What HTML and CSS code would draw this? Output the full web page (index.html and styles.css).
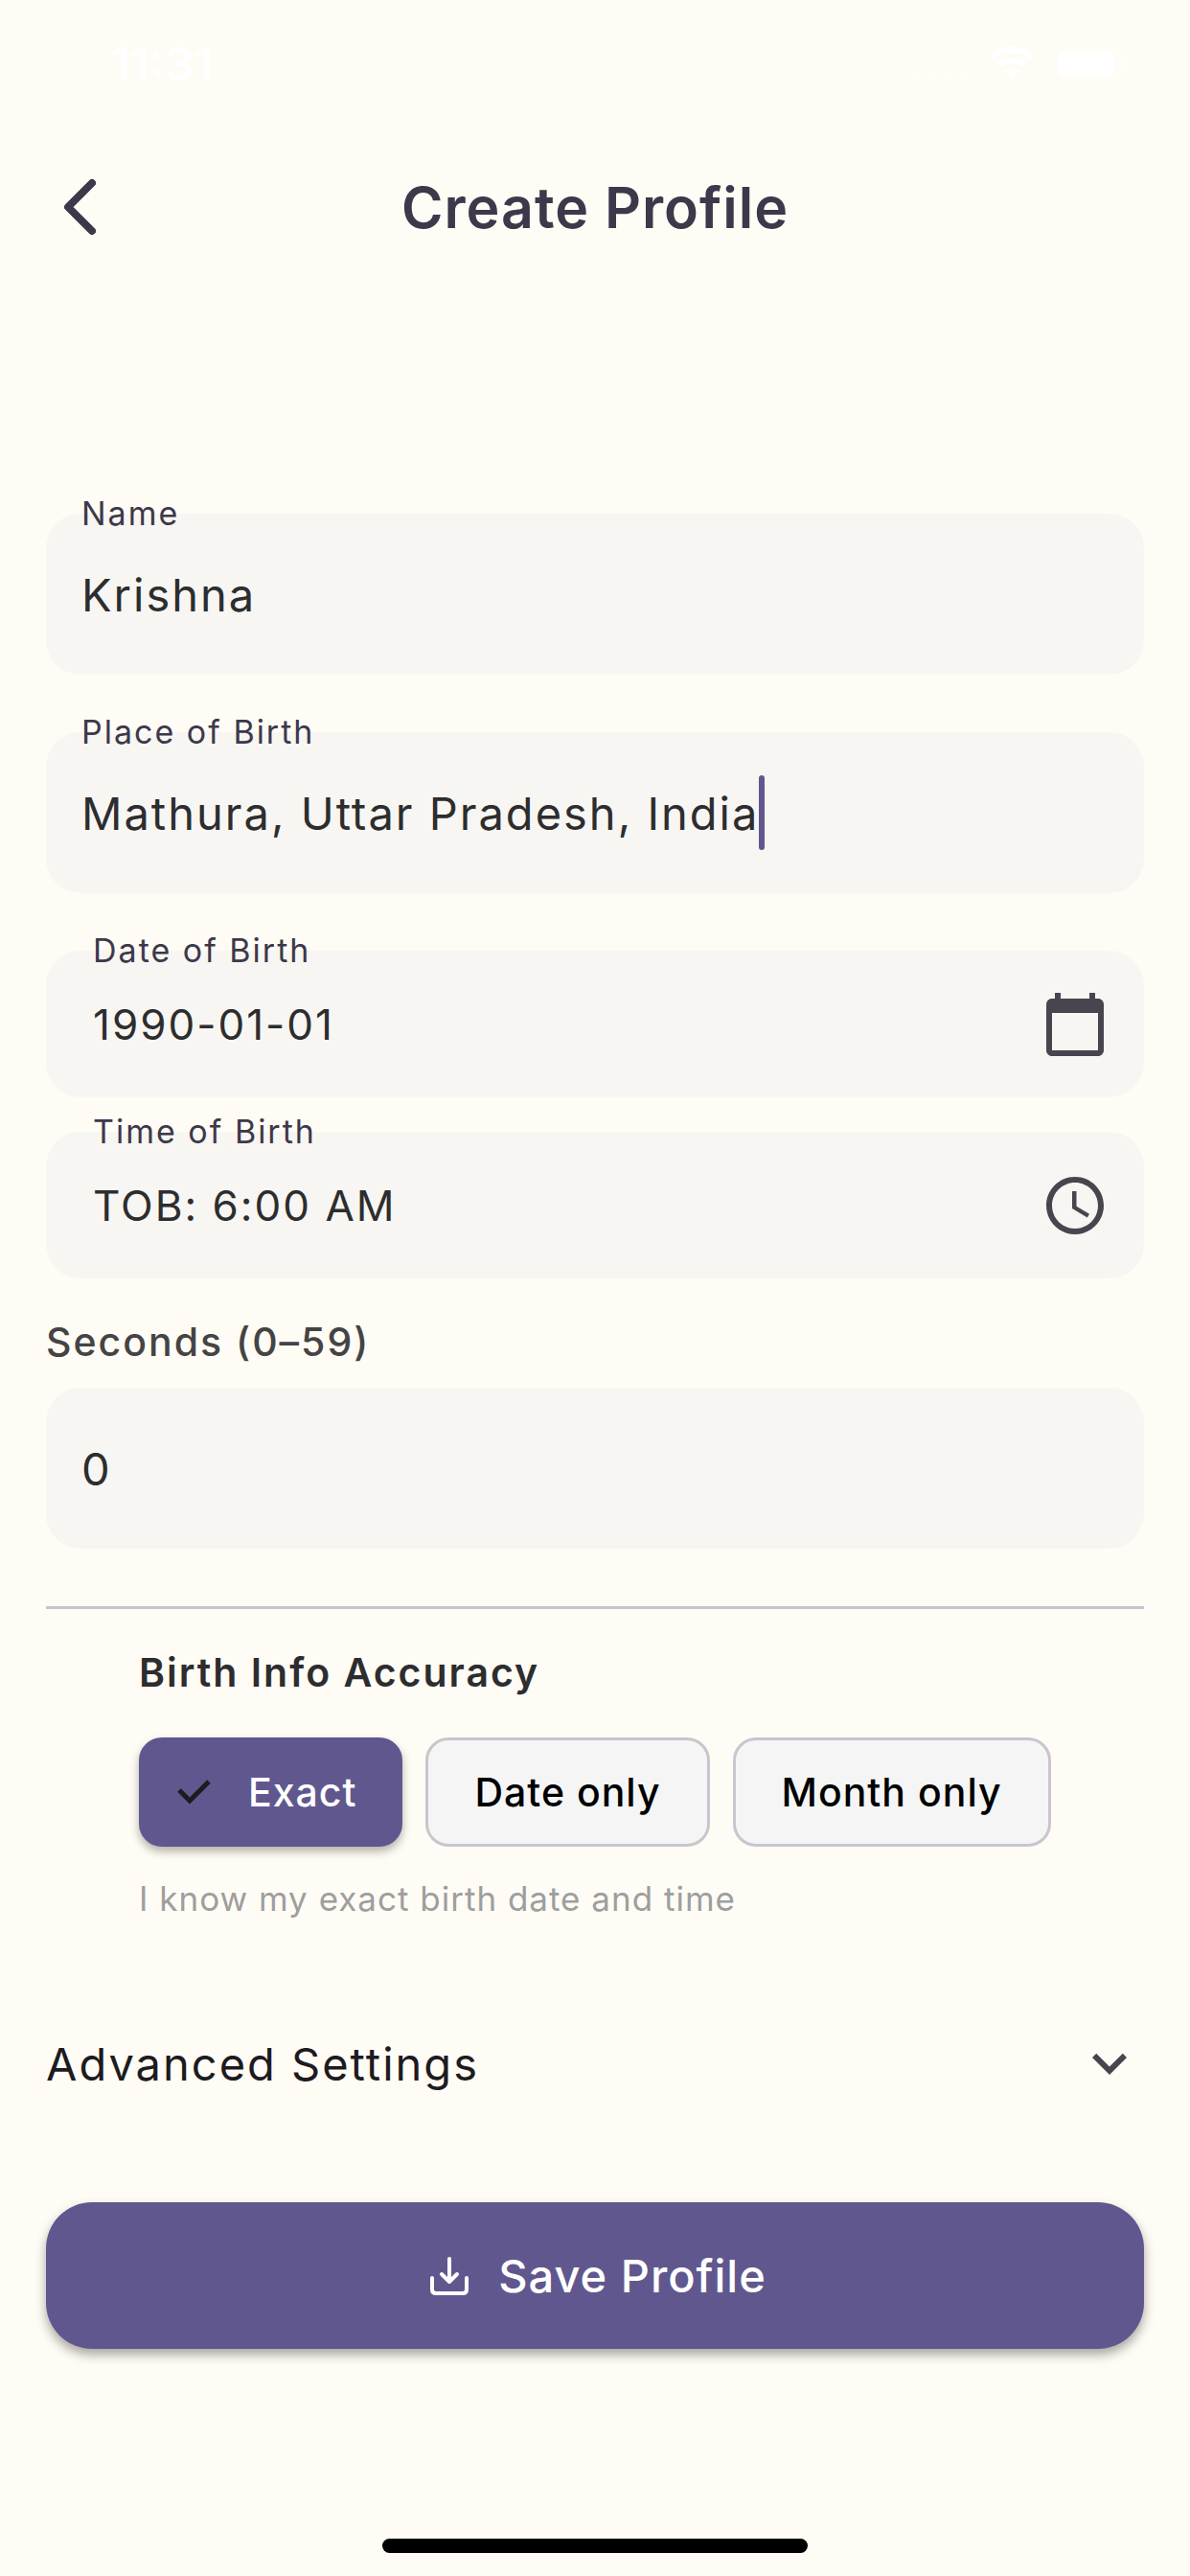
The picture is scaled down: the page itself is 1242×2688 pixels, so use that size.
FILE: index.html
```html
<!DOCTYPE html>
<html lang="en">
<head>
    <meta charset="UTF-8">
    <meta name="viewport" content="width=device-width, initial-scale=1.0">
    <title>Create Profile</title>
    <link rel="stylesheet" href="styles.css">
</head>
<body>
    <!-- Status Bar -->
    <div class="status-bar">
        <span class="status-time">11:31</span>
        <div class="status-icons">
            <svg class="status-dots" width="64" height="12" viewBox="0 0 64 12">
                <circle cx="8" cy="6" r="5"/>
                <circle cx="24" cy="6" r="5"/>
                <circle cx="40" cy="6" r="5"/>
                <circle cx="56" cy="6" r="5"/>
            </svg>
            <svg width="48" height="36" viewBox="0 0 48 36" fill="#fff">
                <path d="M0 10a34 34 0 0 1 48 0l-5 5a27 27 0 0 0-38 0z"/>
                <path d="M8 18a23 23 0 0 1 32 0l-5 5a16 16 0 0 0-22 0z"/>
                <path d="M16 26a12 12 0 0 1 16 0l-8 9z"/>
            </svg>
            <svg width="80" height="36" viewBox="0 0 80 36">
                <rect x="2" y="2" width="69" height="32" rx="9" fill="none" stroke="#fff" stroke-width="2" opacity="0.4"/>
                <rect x="6" y="6" width="60" height="25" rx="5" fill="#fff"/>
                <path d="M75 12q4 2 4 6t-4 6z" fill="#fff" opacity="0.5"/>
            </svg>
        </div>
    </div>

    <header class="app-bar">
        <button type="button" class="back-btn" aria-label="Back">
            <svg width="36" height="60" viewBox="0 0 36 60">
                <path d="M32 5L7 30l25 25" fill="none" stroke="#3d384a" stroke-width="8" stroke-linecap="round" stroke-linejoin="round"/>
            </svg>
        </button>
        <h1>Create Profile</h1>
    </header>

    <form class="profile-form">
        <div class="field">
            <label for="name">Name</label>
            <input type="text" id="name" value="Krishna">
        </div>

        <div class="field">
            <label for="place">Place of Birth</label>
            <input type="text" id="place" class="fit" value="Mathura, Uttar Pradesh, India">
            <span class="caret"></span>
        </div>

        <div class="picker-group">
            <div class="field picker">
                <label for="dob">Date of Birth</label>
                <input type="text" id="dob" value="1990-01-01" readonly>
                <button type="button" class="icon-btn" aria-label="Pick date">
                    <svg width="72" height="72" viewBox="0 0 24 24" fill="#49454f">
                        <path d="M20 3h-1V1h-2v2H7V1H5v2H4c-1.100 0-2 .9-2 2v16c0 1.100.9 2 2 2h16c1.100 0 2-.9 2-2V5c0-1.100-.9-2-2-2zm0 18H4V8h16v13z"/>
                    </svg>
                </button>
            </div>

            <div class="field picker">
                <label for="tob">Time of Birth</label>
                <input type="text" id="tob" value="TOB: 6:00 AM" readonly>
                <button type="button" class="icon-btn" aria-label="Pick time">
                    <svg width="72" height="72" viewBox="0 0 24 24" fill="#49454f">
                        <path d="M11.990 2C6.470 2 2 6.480 2 12s4.470 10 9.990 10C17.520 22 22 17.520 22 12S17.520 2 11.990 2zM12 20c-4.420 0-8-3.580-8-8s3.580-8 8-8 8 3.580 8 8-3.580 8-8 8z"/>
                        <path d="M12.500 7H11v6l5.250 3.150.75-1.230-4.500-2.670z"/>
                    </svg>
                </button>
            </div>
        </div>

        <div class="seconds">
            <label for="seconds">Seconds (0–59)</label>
            <div class="field">
                <input type="text" id="seconds" inputmode="numeric" value="0">
            </div>
        </div>

        <hr>

        <fieldset class="accuracy">
            <legend>Birth Info Accuracy</legend>
            <div class="chips">
                <label class="chip">
                    <input type="radio" name="accuracy" value="exact" checked>
                    <svg width="54" height="54" viewBox="0 0 54 54">
                        <path d="M12 25l11 11 20-20" fill="none" stroke="#1d1b20" stroke-width="5"/>
                    </svg>
                    <span>Exact</span>
                </label>
                <label class="chip">
                    <input type="radio" name="accuracy" value="date">
                    <span>Date only</span>
                </label>
                <label class="chip">
                    <input type="radio" name="accuracy" value="month">
                    <span>Month only</span>
                </label>
            </div>
            <p class="hint">I know my exact birth date and time</p>
        </fieldset>

        <button type="button" class="advanced" aria-expanded="false">
            <span>Advanced Settings</span>
            <svg width="72" height="72" viewBox="0 0 24 24" fill="#49454f">
                <path d="M16.590 8.590L12 13.170 7.410 8.590 6 10l6 6 6-6z"/>
            </svg>
        </button>

        <button type="submit" class="save-btn">
            <svg width="54" height="54" viewBox="0 0 54 54" fill="none" stroke="#fff" stroke-width="4" stroke-linecap="round" stroke-linejoin="round">
                <path d="M27 9v24M19 25l8 8 8-8"/>
                <path d="M9 29v12q0 4 4 4h28q4 0 4-4V29"/>
            </svg>
            <span>Save Profile</span>
        </button>
    </form>

    <div class="home-indicator"></div>
</body>
</html>
```
FILE: styles.css
```css
* {
    box-sizing: border-box;
}

body {
    margin: 0;
    min-height: 100vh;
    display: flex;
    flex-direction: column;
    background-color: #fffcf5;
    color: #2d2d2f;
    font-family: Inter, "Liberation Sans", sans-serif;
}

button, input {
    font: inherit;
    color: inherit;
    letter-spacing: inherit;
}

button {
    border: none;
    background: none;
    padding: 0;
    cursor: pointer;
}

svg {
    display: block;
    flex-shrink: 0;
}

/* Status bar */
.status-bar {
    height: 132px;
    padding: 0 64px 0 116px;
    display: flex;
    justify-content: space-between;
    align-items: center;
    color: #fff;
}

.status-time {
    font-size: 48px;
    font-weight: 600;
}

.status-icons {
    display: flex;
    align-items: center;
    gap: 18px;
}

.status-dots {
    fill: #fff;
    opacity: 0.4;
    align-self: flex-end;
}

/* App bar */
.app-bar {
    height: 168px;
    padding: 0 48px;
    display: grid;
    grid-template-columns: 72px 1fr 72px;
    align-items: center;
    text-align: center;
    color: #3d384a;
}

.back-btn {
    padding-left: 16px;
}

h1 {
    margin: 0;
    font-size: 59px;
    font-weight: 600;
    letter-spacing: 1px;
}

/* Form */
.profile-form {
    display: flex;
    flex-direction: column;
    padding: 236px 48px 0;
    gap: 60px;
    letter-spacing: 2px;
}

.field {
    position: relative;
    height: 168px;
    padding: 0 37px;
    display: flex;
    align-items: center;
    background-color: #f7f6f2;
    border-radius: 36px;
    font-size: 47px;
}

.field label {
    position: absolute;
    top: -22px;
    left: 37px;
    font-size: 34px;
    line-height: 44px;
    color: #3d384a;
}

.field input {
    flex: 1;
    min-width: 0;
    padding: 0;
    border: none;
    outline: none;
    background: none;
}

.field .fit {
    flex: none;
    field-sizing: content;
}

.caret {
    width: 6px;
    height: 78px;
    border-radius: 3px;
    background-color: #61578f;
}

.picker-group {
    display: flex;
    flex-direction: column;
    gap: 36px;
}

.picker {
    height: 153px;
    padding: 0 36px 0 49px;
    font-size: 44px;
}

.picker label {
    left: 49px;
}

.seconds {
    margin-top: -24px;
}

.seconds > label {
    display: block;
    margin-bottom: 18px;
    font-size: 41px;
    line-height: 60px;
    font-weight: 500;
    color: #444;
}

hr {
    width: 100%;
    height: 3px;
    margin: 0;
    border: none;
    background-color: #c9c5d0;
}

/* Birth info accuracy */
.accuracy {
    margin: -24px 0 0;
    padding: 0 0 0 97px;
    border: none;
}

legend {
    padding: 0;
    font-size: 41px;
    line-height: 60px;
    font-weight: 600;
}

.chips {
    display: flex;
    gap: 24px;
    margin-top: 38px;
}

.chip {
    height: 114px;
    padding: 0 48px;
    display: flex;
    align-items: center;
    gap: 30px;
    border: 3px solid #c9c5d0;
    border-radius: 24px;
    background-color: #f5f5f5;
    color: #000;
    font-size: 41px;
    font-weight: 500;
    letter-spacing: 1px;
    white-space: nowrap;
    cursor: pointer;
}

.chip input {
    position: absolute;
    opacity: 0;
}

.chip:has(input:checked) {
    padding: 0 45px 0 27px;
    border-color: #61578f;
    background-color: #61578f;
    color: #fff;
    box-shadow: 0 5px 10px rgba(0, 0, 0, 0.3);
}

.hint {
    margin: 27px 0 0;
    font-size: 35px;
    line-height: 54px;
    letter-spacing: 1px;
    color: #9e9e9e;
}

.advanced {
    height: 170px;
    display: flex;
    justify-content: space-between;
    align-items: center;
    font-size: 47px;
    color: #1d1b20;
}

.save-btn {
    height: 153px;
    display: flex;
    justify-content: center;
    align-items: center;
    gap: 24px;
    border-radius: 48px;
    background-color: #61578f;
    box-shadow: 0 6px 12px rgba(0, 0, 0, 0.35);
    color: #fff;
    font-size: 47px;
    font-weight: 500;
    letter-spacing: 1px;
}

.home-indicator {
    width: 444px;
    height: 15px;
    margin: auto auto 24px;
    border-radius: 8px;
    background-color: #000;
}
```
